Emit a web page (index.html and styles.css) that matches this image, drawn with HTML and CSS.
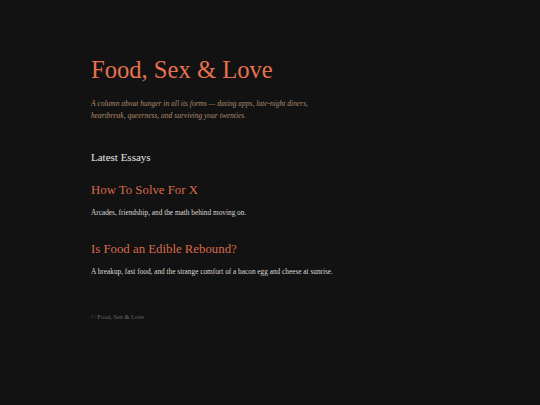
FILE: index.html
```html
<!DOCTYPE html>
<html lang="en">
<head>
<meta charset="utf-8">
<title>Food, Sex &amp; Love</title>
<link rel="stylesheet" href="styles.css">
</head>
<body>
<main class="wrap">
  <header class="masthead">
    <h1 class="site-title">Food, Sex &amp; Love</h1>
    <p class="tagline">A column about hunger in all its forms — dating apps, late-night diners, heartbreak, queerness, and surviving your twenties.</p>
  </header>
  <section class="essays">
    <h2 class="section-title">Latest Essays</h2>
    <article class="essay">
      <h3 class="essay-title">How To Solve For X</h3>
      <p class="essay-desc">Arcades, friendship, and the math behind moving on.</p>
    </article>
    <article class="essay">
      <h3 class="essay-title">Is Food an Edible Rebound?</h3>
      <p class="essay-desc">A breakup, fast food, and the strange comfort of a bacon egg and cheese at sunrise.</p>
    </article>
  </section>
  <footer class="footer">© Food, Sex &amp; Love</footer>
</main>
</body>
</html>
```
FILE: styles.css
```css
html, body {
  margin: 0;
  padding: 0;
  background: #121212;
}
body {
  font-family: "Liberation Serif", "DejaVu Serif", serif;
  color: #e6e1dc;
}
.wrap {
  width: 360px;
  margin: 0 auto;
  padding: 55px 0 40px 1px;
  box-sizing: border-box;
}
.site-title {
  margin: 0;
  font-weight: normal;
  font-size: 24.6px;
  line-height: 30px;
  color: #e5714f;
}
.tagline {
  margin: 12.5px 0 0;
  font-style: italic;
  font-size: 7.5px;
  line-height: 12px;
  color: #b08a6a;
  max-width: 232px;
}
.section-title {
  margin: 27.3px 0 0;
  font-weight: normal;
  font-size: 11px;
  line-height: 16px;
  color: #e8e6e2;
}
.essay-title {
  margin: 16.9px 0 0;
  font-weight: normal;
  font-size: 12.8px;
  line-height: 16px;
  color: #d9694b;
}
.essay-desc {
  margin: 9.6px 0 0;
  font-size: 7.3px;
  line-height: 11px;
  color: #dcd8d2;
}
.essay + .essay .essay-title {
  margin-top: 22.6px;
}
.essay + .essay .essay-desc {
  margin-top: 9.4px;
}
.footer {
  margin-top: 35px;
  font-size: 6.3px;
  line-height: 10px;
  color: #6e6b68;
}
```
